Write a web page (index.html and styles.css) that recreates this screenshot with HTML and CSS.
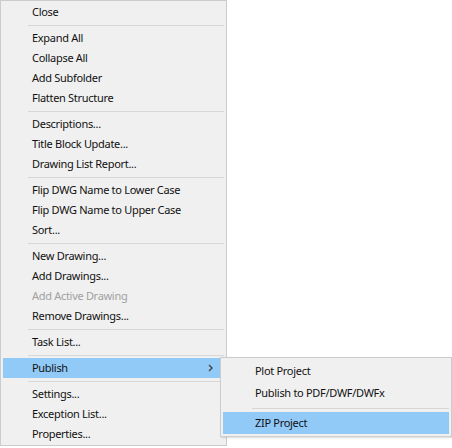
FILE: index.html
```html
<!DOCTYPE html>
<html lang="en">
<head>
    <meta charset="UTF-8">
    <meta name="viewport" content="width=device-width, initial-scale=1.0">
    <title>Project Menu</title>
    <link rel="stylesheet" href="styles.css">
</head>
<body>
    <div class="menu main-menu">
        <div class="item">Close</div>
        <div class="sep"></div>
        <div class="item">Expand All</div>
        <div class="item">Collapse All</div>
        <div class="item">Add Subfolder</div>
        <div class="item">Flatten Structure</div>
        <div class="sep"></div>
        <div class="item">Descriptions...</div>
        <div class="item">Title Block Update...</div>
        <div class="item">Drawing List Report...</div>
        <div class="sep"></div>
        <div class="item">Flip DWG Name to Lower Case</div>
        <div class="item">Flip DWG Name to Upper Case</div>
        <div class="item">Sort...</div>
        <div class="sep"></div>
        <div class="item">New Drawing...</div>
        <div class="item">Add Drawings...</div>
        <div class="item disabled">Add Active Drawing</div>
        <div class="item">Remove Drawings...</div>
        <div class="sep"></div>
        <div class="item">Task List...</div>
        <div class="sep"></div>
        <div class="item active has-sub">Publish
            <svg class="arrow" width="5" height="8" viewBox="0 0 5 8"><path d="M1 1 L4 4 L1 7" fill="none" stroke="#404040" stroke-width="1.3"/></svg>
        </div>
        <div class="sep"></div>
        <div class="item">Settings...</div>
        <div class="item">Exception List...</div>
        <div class="item">Properties...</div>
    </div>
    <div class="menu sub-menu">
        <div class="item">Plot Project</div>
        <div class="item">Publish to PDF/DWF/DWFx</div>
        <div class="sep"></div>
        <div class="item active">ZIP Project</div>
    </div>
</body>
</html>
```

FILE: styles.css
```css
* { margin: 0; padding: 0; box-sizing: border-box; }
body { background: #fff; font-family: "Noto Sans", "Open Sans", sans-serif; font-size: 11px; letter-spacing: -0.3px; color: #111; width: 452px; height: 448px; overflow: hidden; position: relative; }
.menu { background: #f0f0f0; border: 1px solid #cccccc; display: flex; flex-direction: column; padding: 1px 2px; }
.main-menu { width: 227px; height: 446px; }
.item { height: 20px; line-height: 20px; padding-left: 29px; white-space: nowrap; display: flex; align-items: center; }
.item.disabled { color: #a0a0a0; }
.item.active { background: #91c9f7; }
.has-sub { justify-content: space-between; padding-right: 11px; }
.sep { height: 6px; margin-left: 25px; position: relative; }
.sep::after { content: ""; position: absolute; left: 0; right: 0; top: 3px; height: 1px; background: #d7d7d7; }
.sub-menu { position: absolute; left: 220px; top: 357px; width: 232px; height: 80px; padding: 2px 2px 1px; box-shadow: 1px 1px 2px rgba(0, 0, 0, 0.15); }
.sub-menu .item { height: 22px; line-height: 22px; padding-left: 32px; }
.sub-menu .sep { height: 8px; margin-left: 29px; }
.sub-menu .sep::after { top: 4px; }
```
